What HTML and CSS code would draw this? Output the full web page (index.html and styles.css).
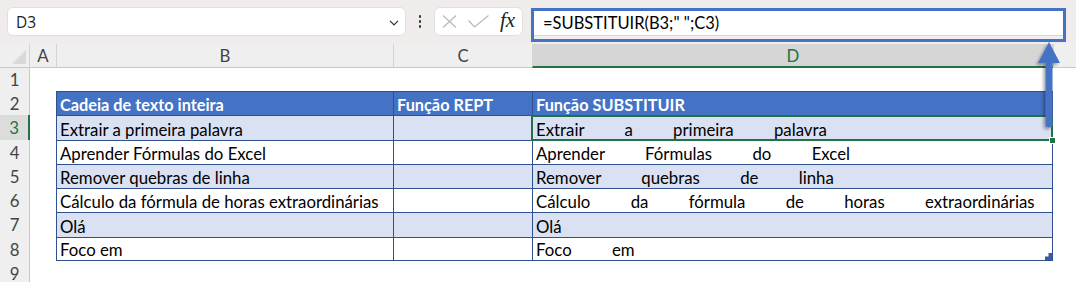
FILE: index.html
```html
<!DOCTYPE html>
<html lang="pt">
<head>
  <meta charset="UTF-8" />
  <title>Função SUBSTITUIR</title>
  <link rel="stylesheet" href="styles.css">
</head>
<body>
  <!-- barra de fórmulas -->
  <div class="bar">
    <div class="name-box">
      <span>D3</span>
      <svg class="chev" width="10" height="6" viewBox="0 0 10 6"><path d="M1 0.8l4 4 4-4" fill="none" stroke="#333" stroke-width="1.2"/></svg>
    </div>
    <div class="dots"><i></i><i></i><i></i></div>
    <div class="fx-box">
      <svg class="ico-x" width="15" height="13" viewBox="0 0 15 13"><path d="M1 0.5l13 12M14 0.5l-13 12" stroke="#b8b8b8" stroke-width="1.2" fill="none"/></svg>
      <svg class="ico-ok" width="21" height="13" viewBox="0 0 21 13"><path d="M0.5 5.5l6 6.5 14-11.5" stroke="#b8b8b8" stroke-width="1.2" fill="none"/></svg>
      <span class="fx">fx</span>
    </div>
    <div class="formula">
      <div class="formula-field">=SUBSTITUIR(B3;" ";C3)</div>
    </div>
  </div>

  <!-- planilha -->
  <div class="sheet">
    <div class="corner"></div>
    <div class="ch">A</div>
    <div class="ch">B</div>
    <div class="ch">C</div>
    <div class="ch sel">D</div>
    <div class="ch"></div>

    <div class="rh">1</div><div></div><div></div><div></div><div></div><div></div>

    <div class="rh">2</div><div></div>
    <div class="t hd">Cadeia de texto inteira</div>
    <div class="t hd">Função REPT</div>
    <div class="t hd d">Função SUBSTITUIR</div>
    <div></div>

    <div class="rh sel">3</div><div></div>
    <div class="t band">Extrair a primeira palavra</div>
    <div class="t band"></div>
    <div class="t band d wide active">Extrair a primeira palavra</div>
    <div></div>

    <div class="rh">4</div><div></div>
    <div class="t">Aprender Fórmulas do Excel</div>
    <div class="t"></div>
    <div class="t d wide">Aprender Fórmulas do Excel</div>
    <div></div>

    <div class="rh">5</div><div></div>
    <div class="t band">Remover quebras de linha</div>
    <div class="t band"></div>
    <div class="t band d wide">Remover quebras de linha</div>
    <div></div>

    <div class="rh">6</div><div></div>
    <div class="t">Cálculo da fórmula de horas extraordinárias</div>
    <div class="t"></div>
    <div class="t d wide">Cálculo da fórmula de horas extraordinárias</div>
    <div></div>

    <div class="rh">7</div><div></div>
    <div class="t band">Olá</div>
    <div class="t band"></div>
    <div class="t band d wide">Olá</div>
    <div></div>

    <div class="rh">8</div><div></div>
    <div class="t end">Foco em</div>
    <div class="t end"></div>
    <div class="t d end wide resize">Foco em</div>
    <div></div>

    <div class="rh">9</div><div></div><div></div><div></div><div></div><div></div>
  </div>

  <!-- seta azul -->
  <svg class="arrow" width="40" height="100" viewBox="0 0 40 100">
    <defs>
      <filter id="sh" x="-50%" y="-20%" width="200%" height="140%">
        <feDropShadow dx="-2" dy="2" stdDeviation="1.6" flood-color="#000" flood-opacity="0.35"/>
      </filter>
    </defs>
    <path d="M19 6L30 27H22.5V88A3.5 3.5 0 0 1 15.5 88V27H8Z" fill="#4472c4" filter="url(#sh)"/>
  </svg>
</body>
</html>
```

FILE: styles.css
```css
body {
  margin: 0;
  width: 1076px;
  height: 282px;
  overflow: hidden;
  background: #fff;
  font-family: "Lato", "Liberation Sans", sans-serif;
  position: relative;
}

/* barra de fórmulas */
.bar {
  height: 44px;
  box-sizing: border-box;
  padding: 7px 0 0 7px;
  display: flex;
  align-items: flex-start;
  background: #f0ecec;
}

.name-box {
  width: 399px;
  height: 29px;
  box-sizing: border-box;
  background: #fff;
  border: 1px solid #e4dfdf;
  border-radius: 6px;
  display: flex;
  align-items: center;
  justify-content: space-between;
  padding: 0 6px 0 8px;
  font-family: "Open Sans", sans-serif;
  font-size: 15.5px;
  color: #222;
}

.chev {
  margin-top: 2px;
}

.dots {
  width: 28px;
  height: 29px;
  display: flex;
  flex-direction: column;
  align-items: center;
  justify-content: center;
  gap: 2.5px;
}

.dots i {
  width: 2.5px;
  height: 2.5px;
  background: #333;
  border-radius: 50%;
}

.fx-box {
  width: 89px;
  height: 29px;
  box-sizing: border-box;
  background: #fff;
  border: 1px solid #e4dfdf;
  border-radius: 6px;
  display: flex;
  align-items: center;
  padding-left: 7px;
}

.ico-ok {
  margin-left: 11px;
}

.fx {
  margin-left: 11px;
  font-family: "Liberation Serif", serif;
  font-style: italic;
  font-size: 21px;
  color: #222;
  line-height: 1;
  margin-top: -2px;
}

.formula {
  margin: 1px 0 0 8px;
  width: 535px;
  height: 34px;
  box-sizing: border-box;
  border: 3px solid #4472c4;
  background: #f0eeee;
}

.formula-field {
  height: 24px;
  background: #fff;
  border-bottom: 1px solid #d6d6d6;
  padding-left: 9px;
  font-size: 16.5px;
  line-height: 24px;
  color: #000;
}

/* planilha */
.sheet {
  display: grid;
  grid-template-columns: 30px 26px 337px 139px 521px 1fr;
  grid-template-rows: 24px 23px 24px 25px 24px 24px 24px 25px 24px 24px;
  font-size: 16.8px;
}

.corner {
  background: #efefef;
  border-bottom: 1px solid #c8c8c8;
  border-right: 1px solid #d4d4d4;
  position: relative;
}

.corner::after {
  content: "";
  position: absolute;
  right: 3px;
  bottom: 3px;
  width: 14px;
  height: 14px;
  background: #d9d9d9;
  clip-path: polygon(100% 0, 100% 100%, 0 100%);
}

.ch {
  background: #efefef;
  border-left: 1px solid #d4d4d4;
  border-bottom: 1px solid #c8c8c8;
  color: #444;
  display: flex;
  align-items: center;
  justify-content: center;
}

.ch:nth-child(2) {
  border-left: none;
}

.ch.sel {
  background: #d6d6d6;
  color: #217346;
  border-bottom: 2px solid #217346;
}

.rh {
  background: #efefef;
  border-right: 1px solid #c8c8c8;
  color: #444;
  display: flex;
  align-items: center;
  justify-content: center;
}

.rh.sel {
  background: #dcdcdc;
  color: #217346;
  border-right: 2px solid #217346;
}

.t {
  border-left: 1px solid #2f528f;
  border-top: 1px solid #2f528f;
  padding: 0 0 0 3px;
  display: flex;
  align-items: flex-end;
  line-height: 20px;
  white-space: nowrap;
  overflow: hidden;
  color: #000;
}

.t.d {
  border-right: 1px solid #2f528f;
}

.t.end {
  border-bottom: 1px solid #2f528f;
}

.t.hd {
  background: #4472c4;
  color: #fff;
  font-weight: bold;
  font-size: 16.3px;
}

.t.band {
  background: #d9e1f2;
}

.wide {
  word-spacing: 36px;
}

.active {
  position: relative;
  overflow: visible;
}

.active::after {
  content: "";
  position: absolute;
  left: -2px;
  top: -1px;
  right: -1px;
  bottom: -1px;
  border: 2px solid #217346;
}

.active::before {
  content: "";
  position: absolute;
  right: -4px;
  bottom: -4px;
  width: 5px;
  height: 5px;
  background: #217346;
  border: 1px solid #fff;
  z-index: 2;
}

.resize {
  position: relative;
}

.resize::after {
  content: "";
  position: absolute;
  right: 0;
  bottom: 0;
  width: 7px;
  height: 7px;
  background: #3a5ca8;
  clip-path: polygon(50% 0, 100% 0, 100% 100%, 0 100%, 0 50%, 50% 50%);
}

.arrow {
  position: absolute;
  left: 1030px;
  top: 36px;
}
```
